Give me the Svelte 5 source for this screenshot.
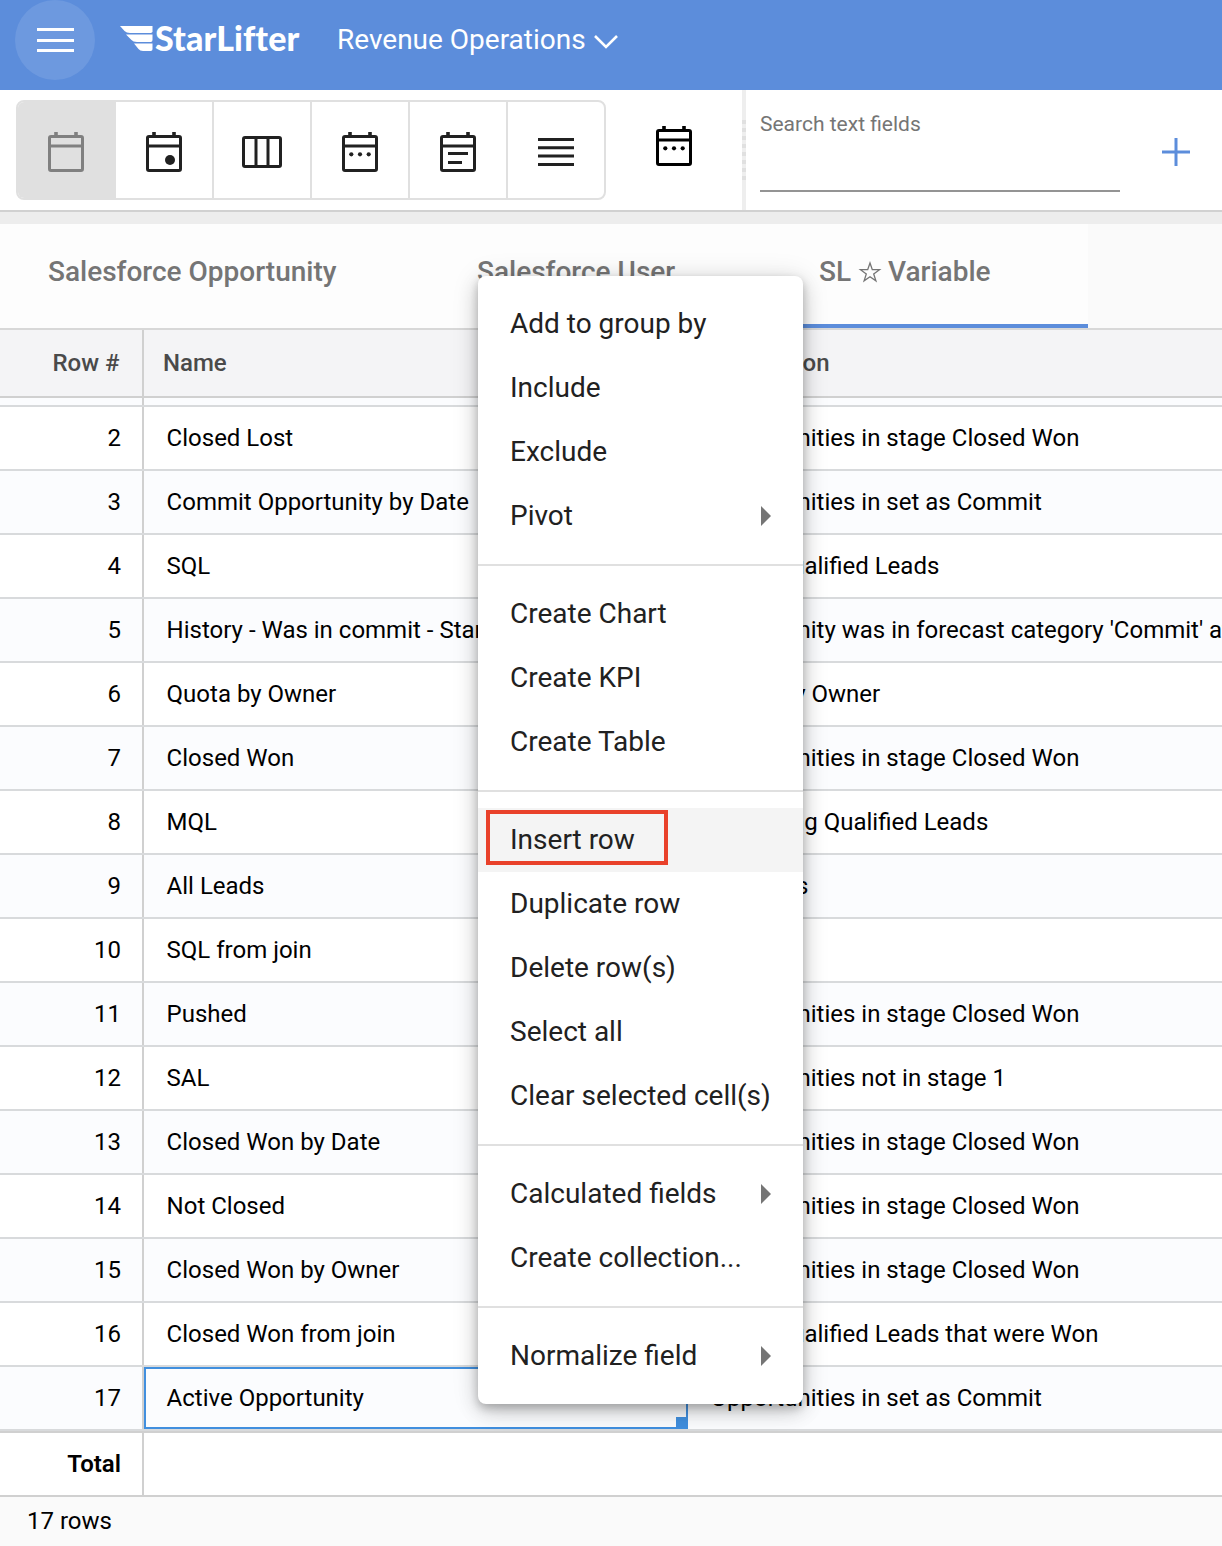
<script>
  const views = ['day', 'dot', 'columns', 'dots', 'notes', 'lines'];

  const won = 'Opportunities in stage Closed Won';
  const rows = [
    ['Closed Lost', won],
    ['Commit Opportunity by Date', 'Opportunities in set as Commit'],
    ['SQL', 'Sales Qualified Leads'],
    ['History - Was in commit - Start', "Opportunity was in forecast category 'Commit' at"],
    ['Quota by Owner', 'Quota by Owner'],
    ['Closed Won', won],
    ['MQL', 'Marketing Qualified Leads'],
    ['All Leads', 'All Leads'],
    ['SQL from join', ''],
    ['Pushed', won],
    ['SAL', 'Opportunities not in stage 1'],
    ['Closed Won by Date', won],
    ['Not Closed', won],
    ['Closed Won by Owner', won],
    ['Closed Won from join', 'Sales Qualified Leads that were Won'],
    ['Active Opportunity', 'Opportunities in set as Commit'],
  ];

  const menu = [
    [{ label: 'Add to group by' }, { label: 'Include' }, { label: 'Exclude' }, { label: 'Pivot', sub: true }],
    [{ label: 'Create Chart' }, { label: 'Create KPI' }, { label: 'Create Table' }],
    [
      { label: 'Insert row', active: true },
      { label: 'Duplicate row' },
      { label: 'Delete row(s)' },
      { label: 'Select all' },
      { label: 'Clear selected cell(s)' },
    ],
    [{ label: 'Calculated fields', sub: true }, { label: 'Create collection...' }],
    [{ label: 'Normalize field', sub: true }],
  ];
</script>

{#snippet icon(kind)}
  <svg class="icon" width="40" height="40" viewBox="0 0 40 40" fill="none" stroke="currentColor" stroke-width="3">
    {#if kind === 'columns'}
      <rect x="1.5" y="5.5" width="37" height="29" rx="1.5" />
      <path d="M14 6v28M26 6v28" />
    {:else if kind === 'lines'}
      <path d="M2 7.5h36M2 15.8h36M2 24.1h36M2 32.5h36" />
    {:else}
      <rect x="3.5" y="4.5" width="33" height="34" rx="1.5" />
      <path d="M10 0v4M30 0v4" stroke-width="3.6" />
      <path d="M4 14h32" />
      {#if kind === 'dot'}
        <circle cx="26" cy="28" r="5" fill="currentColor" stroke="none" />
      {:else if kind === 'dots'}
        <g fill="currentColor" stroke="none">
          <circle cx="11.3" cy="22.3" r="2.1" />
          <circle cx="20" cy="22.3" r="2.1" />
          <circle cx="28.7" cy="22.3" r="2.1" />
        </g>
      {:else if kind === 'notes'}
        <path d="M10 21.5h20M10 30.5h14" />
      {/if}
    {/if}
  </svg>
{/snippet}

<div class="app">
  <header class="topbar">
    <button class="burger" aria-label="Menu"><i></i><i></i><i></i></button>
    <div class="logo">
      <svg width="34" height="26" viewBox="0 0 34 26" fill="#fff">
        <path d="M0 0H32.5V5.2Q32.5 7 30.7 7H10Q6.500 7 4.500 5Z" />
        <path d="M6 8.500H32.500V14Q32.500 16 30.700 16H17Q13 16 11.500 14Z" />
        <path d="M14 17.500H32.500V23.200Q32.500 25 30.700 25H23Q20 25 18.500 23Z" />
      </svg>
      <span class="wordmark">StarLifter</span>
    </div>
    <span class="workspace">Revenue Operations</span>
    <svg class="chevron" width="24" height="16" viewBox="0 0 24 16" fill="none" stroke="#fff" stroke-width="2.6"><path d="M1 2L12 13L23 2" /></svg>
  </header>

  <div class="toolbar">
    <div class="views">
      {#each views as view, i}
        <button class="view" class:selected={i === 0} aria-label={view}>{@render icon(view)}</button>
      {/each}
    </div>
    <div class="calendar">{@render icon('dots')}</div>
    <div class="gutter"><div class="grip"></div></div>
    <div class="search"><span>Search text fields</span></div>
    <svg class="plus" width="28" height="28" viewBox="0 0 28 28" stroke="#5c8ddb" stroke-width="3"><path d="M14 0v28M0 14h28" /></svg>
  </div>

  <div class="strip"></div>

  <nav class="tabs">
    <div class="tab first">Salesforce Opportunity</div>
    <div class="tab second">Salesforce User</div>
    <div class="tab current">SL&nbsp;<svg class="star" width="24" height="24" viewBox="0 0 24 24" fill="none" stroke="currentColor" stroke-width="1.3"><path d="M12 3L14.300 9.700H21.500L15.700 13.900L17.900 20.900L12 16.700L6.100 20.900L8.300 13.900L2.500 9.700H9.700Z" /></svg>&nbsp;Variable</div>
  </nav>

  <div class="row head">
    <div class="num">Row #</div>
    <div class="name">Name</div>
    <div class="desc">Description</div>
  </div>
  <div class="row sliver tint"><div class="num"></div></div>
  {#each rows as [name, desc], i}
    <div class="row" class:tint={i % 2 === 1}>
      <div class="num">{i + 2}</div>
      <div class="name" class:picked={i === rows.length - 1}><span>{name}</span></div>
      <div class="desc">{desc}</div>
    </div>
  {/each}
  <div class="row total"><div class="num">Total</div></div>
  <footer>17 rows</footer>

  <div class="menu">
    {#each menu as group}
      <div class="group">
        {#each group as item}
          <div class="item" class:active={item.active}>
            <span class="label">{item.label}</span>
            {#if item.sub}<i class="arrow"></i>{/if}
          </div>
        {/each}
      </div>
    {/each}
  </div>
</div>

<style>
  :global(body) { background: #fff; }
  .app {
    position: relative;
    width: 1222px;
    height: 1546px;
    overflow: hidden;
    display: flex;
    flex-direction: column;
    font-family: Roboto, sans-serif;
    font-size: 24px;
    color: #000;
    box-sizing: border-box;
  }
  .app *, .app *::before, .app *::after { box-sizing: border-box; }
  .app > * { flex-shrink: 0; }
  button { border: 0; padding: 0; margin: 0; background: none; color: inherit; }
  .icon, svg { display: block; }

  .topbar { height: 90px; background: #5c8ddb; display: flex; padding-left: 15px; color: #fff; }
  .burger {
    width: 80px; height: 80px; border-radius: 50%; background: #6d99df;
    display: flex; flex-direction: column; align-items: center; justify-content: center; gap: 7.500px;
  }
  .burger i { width: 37px; height: 3px; background: #fff; }
  .logo { display: flex; margin-left: 25px; padding-top: 26px; width: 217px; }
  .wordmark { font: 900 34px/24px Lato, sans-serif; margin-left: 1px; letter-spacing: .1px; white-space: nowrap; }
  .workspace { font-size: 28px; line-height: 80px; width: 257px; white-space: nowrap; }
  .chevron { margin-top: 34px; }

  .toolbar { height: 122px; border-bottom: 2px solid #d1d1d1; display: flex; background: #fff; }
  .views {
    display: flex; width: 590px; height: 100px; margin: 10px 0 0 16px;
    border: 2px solid #e0e0e0; border-radius: 8px; overflow: hidden; color: #212121;
  }
  .view { flex: none; width: 98px; height: 96px; display: flex; align-items: center; justify-content: center; border-right: 2px solid #e0e0e0; padding-top: 4px; }
  .view:last-child { width: 96px; border-right: 0; }
  .view.selected { background: #e0e0e0; color: #808080; }
  .calendar { width: 136px; padding: 36px 0 0 48px; }
  .gutter { width: 4px; background: #eee; padding-top: 30px; }
  .grip { height: 60px; background: repeating-linear-gradient(#e0e0e0 0 4px, #eee 4px 8px); }
  .search { width: 360px; height: 102px; margin-left: 14px; border-bottom: 2px solid #949494; color: #757575; font-size: 21px; line-height: 68px; }
  .plus { margin: 48px 0 0 42px; }

  .strip { height: 12px; background: #ededed; }
  .tabs { height: 106px; display: flex; background: #fafafa; border-bottom: 2px solid #d8d8d8; font-weight: 500; font-size: 28px; line-height: 96px; color: #757575; }
  .tab { background: #fdfdfd; white-space: nowrap; display: flex; align-items: center; height: 104px; padding-bottom: 8px; }
  .first { width: 429px; padding-left: 48px; }
  .second { width: 342px; padding-left: 48px; }
  .current { width: 317px; padding-left: 48px; border-bottom: 4px solid #5c8ddb; padding-bottom: 4px; }
  .star { margin-right: -1px; }

  .row { height: 64px; border-bottom: 2px solid #d8dadc; display: flex; line-height: 62px; white-space: nowrap; }
  .tint { background: #fbfcfe; }
  .num { width: 144px; border-right: 2px solid #d0d0d0; text-align: right; padding-right: 21px; }
  .name { width: 544px; padding-left: 22.600px; overflow: hidden; }
  .desc { width: 534px; padding-left: 22.500px; overflow: hidden; }
  .head { height: 68px; line-height: 66px; background: #f4f4f6; border-color: #d0d0d0; font-weight: 500; color: #4a4a4a; }
  .head .num { padding-right: 22.500px; }
  .head .name, .head .desc { padding-left: 19px; }
  .sliver { height: 9px; }
  .picked { position: relative; border: 2px solid #418fde; padding-left: 20.600px; line-height: 58px; }
  .picked::after { content: ''; position: absolute; right: -2px; bottom: -2px; width: 12px; height: 12px; background: #418fde; }
  .total { height: 66px; border-top: 2px solid #d0d0d0; border-bottom-color: #d0d0d0; line-height: 62px; }
  .total .num { font-weight: 600; }
  footer { flex: 1; background: #fafafa; padding-left: 27px; line-height: 48px; }

  .menu {
    position: absolute; left: 478px; top: 276px; width: 325px; height: 1128px;
    background: #fff; border-radius: 8px; font-size: 28px; color: #212121;
    box-shadow: 0 4px 8px rgba(0,0,0,.2), 0 8px 20px rgba(0,0,0,.16), 0 2px 28px rgba(0,0,0,.12);
  }
  .group { padding: 16px 0; }
  .group + .group { border-top: 2px solid #e0e0e0; }
  .item { position: relative; height: 64px; line-height: 64px; padding: 0 32px; display: flex; align-items: center; justify-content: space-between; white-space: nowrap; }
  .active { background: #f4f4f4; }
  .active::after { content: ''; position: absolute; left: 8px; top: 2px; width: 182px; height: 55px; border: 4px solid #e9412a; }
  .arrow { border-left: 10px solid #757575; border-top: 10px solid transparent; border-bottom: 10px solid transparent; }
</style>
